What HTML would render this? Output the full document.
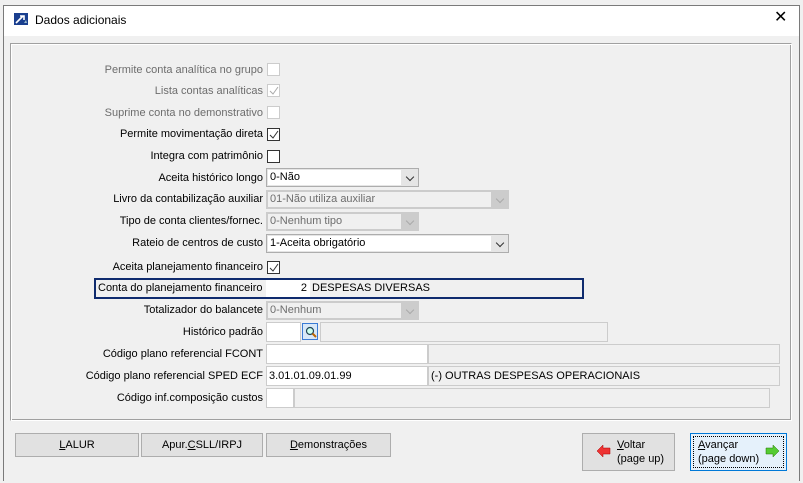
<!DOCTYPE html>
<html><head><meta charset="utf-8"><style>
*{box-sizing:border-box}
body{margin:0;width:803px;height:483px;background:#f0f0f0;font-family:"Liberation Sans",sans-serif;font-size:11px;color:#000;position:relative;overflow:hidden}
.a{position:absolute}
.win{left:3px;top:5px;width:797px;height:476px;border:1px solid #7a7a7a;border-bottom:none;background:#f0f0f0}
.title{left:4px;top:6px;width:795px;height:30px;background:#fff}
.panel{left:10px;top:43px;width:782px;height:378px;border:1px solid #a0a0a0;border-right-color:#fff;border-bottom-color:#fff;box-shadow:inset 1px 1px 0 #fff, inset -1px -1px 0 #a0a0a0}
.lbl{right:540px;text-align:right;white-space:nowrap;line-height:14px}
.dis{color:#6d6d6d}
.cb{width:13px;height:13px;border:1px solid #333;background:#fff}
.cb.d{border-color:#ccc}
.combo{height:19px;border:1px solid #adadad;background:#e5e5e5}
.combo .in{position:absolute;left:1px;top:1px;bottom:1px;right:17px;background:#fff;padding-left:2px;line-height:15px}
.combo.d{border-color:#ccc;background:#ccc}
.combo.d .in{background:#f0f0f0;color:#6d6d6d}
.chev{position:absolute;right:5px;top:5px;width:6px;height:6px;border-right:1px solid #333;border-bottom:1px solid #333;transform:rotate(45deg)}
.combo.d .chev{border-color:#aaa}
.inp{height:20px;border:1px solid #ccc;background:#fff;line-height:18px;padding-left:2px}
.gr{height:20px;border:1px solid #ccc;background:#f0f0f0;line-height:18px;padding-left:2px}
.btn{height:24px;border:1px solid #adadad;background:#e1e1e1;text-align:center;line-height:22px}
u{text-decoration:underline}
</style></head><body>
<div class="a win"></div>
<div class="a title"></div>
<svg class="a" style="left:14px;top:13px" width="14" height="12"><rect width="14" height="12" fill="#1a3f8f"/><path d="M2 10 L9 3 M6 3 H10 V7" stroke="#fff" stroke-width="1.6" fill="none"/><path d="M10 10 l2-3 l1 3z" fill="#9bc"/></svg>
<div class="a" style="left:35px;top:13px;font-size:12px">Dados adicionais</div>
<div class="a" style="left:774px;top:8px;font-size:16px;line-height:20px">✕</div>
<div class="a panel"></div>

<div class="a lbl dis" style="top:63px">Permite conta analítica no grupo</div><div class="a cb d" style="left:267px;top:63px"></div>
<div class="a lbl dis" style="top:84px">Lista contas analíticas</div><div class="a cb d" style="left:267px;top:84px"><svg class="a" style="left:1px;top:1px" width="10" height="10"><path d="M1 5 L4 8 L9 1" stroke="#aaa" fill="none"/></svg></div>
<div class="a lbl dis" style="top:106px">Suprime conta no demonstrativo</div><div class="a cb d" style="left:267px;top:106px"></div>
<div class="a lbl" style="top:127px">Permite movimentação direta</div><div class="a cb" style="left:267px;top:128px"><svg class="a" style="left:1px;top:1px" width="10" height="10"><path d="M1 5 L4 8 L9 1" stroke="#333" fill="none"/></svg></div>
<div class="a lbl" style="top:149px">Integra com patrimônio</div><div class="a cb" style="left:267px;top:150px"></div>
<div class="a lbl" style="top:171px">Aceita histórico longo</div><div class="a combo" style="left:266px;top:168px;width:153px"><div class="in">0-Não</div><div class="chev"></div></div>
<div class="a lbl" style="top:192px">Livro da contabilização auxiliar</div><div class="a combo d" style="left:266px;top:190px;width:243px"><div class="in">01-Não utiliza auxiliar</div><div class="chev"></div></div>
<div class="a lbl" style="top:214px">Tipo de conta clientes/fornec.</div><div class="a combo d" style="left:266px;top:212px;width:153px"><div class="in">0-Nenhum tipo</div><div class="chev"></div></div>
<div class="a lbl" style="top:236px">Rateio de centros de custo</div><div class="a combo" style="left:266px;top:234px;width:243px"><div class="in">1-Aceita obrigatório</div><div class="chev"></div></div>
<div class="a lbl" style="top:260px">Aceita planejamento financeiro</div><div class="a cb" style="left:267px;top:261px"><svg class="a" style="left:1px;top:1px" width="10" height="10"><path d="M1 5 L4 8 L9 1" stroke="#333" fill="none"/></svg></div>

<div class="a" style="left:94px;top:278px;width:490px;height:21px;border:2px solid #0f2b6e"></div>
<div class="a" style="left:98px;top:281px;line-height:14px">Conta do planejamento financeiro</div>
<div class="a" style="left:266px;top:280px;width:44px;height:17px;background:#fff;text-align:right;padding-right:3px;line-height:16px">2</div>
<div class="a" style="left:310px;top:280px;width:272px;height:17px;background:#f0f0f0;line-height:16px;padding-left:2px">DESPESAS DIVERSAS</div>

<div class="a lbl" style="top:303px">Totalizador do balancete</div><div class="a combo d" style="left:266px;top:301px;width:153px"><div class="in">0-Nenhum</div><div class="chev"></div></div>
<div class="a lbl" style="top:325px">Histórico padrão</div><div class="a inp" style="left:266px;top:322px;width:35px"></div>
<div class="a" style="left:302px;top:323px;width:16px;height:17px;border:1px solid #3a7bd5;background:#d8e8f8"><svg class="a" style="left:2px;top:2px" width="12" height="12"><circle cx="5" cy="5" r="3.5" stroke="#245" fill="#cfe" stroke-width="1.2"/><path d="M7.5 7.5 L11 11" stroke="#b60" stroke-width="2"/></svg></div>
<div class="a gr" style="left:320px;top:322px;width:288px"></div>
<div class="a lbl" style="top:347px">Código plano referencial FCONT</div><div class="a inp" style="left:266px;top:344px;width:162px"></div><div class="a gr" style="left:428px;top:344px;width:352px"></div>
<div class="a lbl" style="top:369px">Código plano referencial SPED ECF</div><div class="a inp" style="left:266px;top:366px;width:162px">3.01.01.09.01.99</div><div class="a gr" style="left:428px;top:366px;width:352px">(-) OUTRAS DESPESAS OPERACIONAIS</div>
<div class="a lbl" style="top:391px">Código inf.composição custos</div><div class="a inp" style="left:266px;top:388px;width:28px"></div><div class="a gr" style="left:294px;top:388px;width:476px"></div>

<div class="a btn" style="left:15px;top:433px;width:124px"><u>L</u>ALUR</div>
<div class="a btn" style="left:141px;top:433px;width:122px">Apur.<u>C</u>SLL/IRPJ</div>
<div class="a btn" style="left:266px;top:433px;width:125px"><u>D</u>emonstrações</div>
<div class="a btn" style="left:582px;top:433px;width:93px;height:38px;line-height:14px;text-align:left">
 <svg class="a" style="left:14px;top:11px" width="14" height="12"><path d="M0 6 L6 0 V3 H13 V9 H6 V12 Z" fill="#e33" stroke="#a00" stroke-width=".5"/></svg>
 <div class="a" style="left:34px;top:4px"><u>V</u>oltar<br>(page up)</div></div>
<div class="a btn" style="left:690px;top:433px;width:97px;height:38px;line-height:14px;text-align:left;border-color:#0078d7;background:#e5f1fb">
 <div class="a" style="left:2px;top:2px;right:2px;bottom:2px;border:1px dotted #000"></div>
 <svg class="a" style="left:74px;top:11px" width="14" height="12"><path d="M14 6 L8 0 V3 H1 V9 H8 V12 Z" fill="#5c3" stroke="#270" stroke-width=".5"/></svg>
 <div class="a" style="left:7px;top:4px"><u>A</u>vançar<br>(page down)</div></div>
</body></html>
